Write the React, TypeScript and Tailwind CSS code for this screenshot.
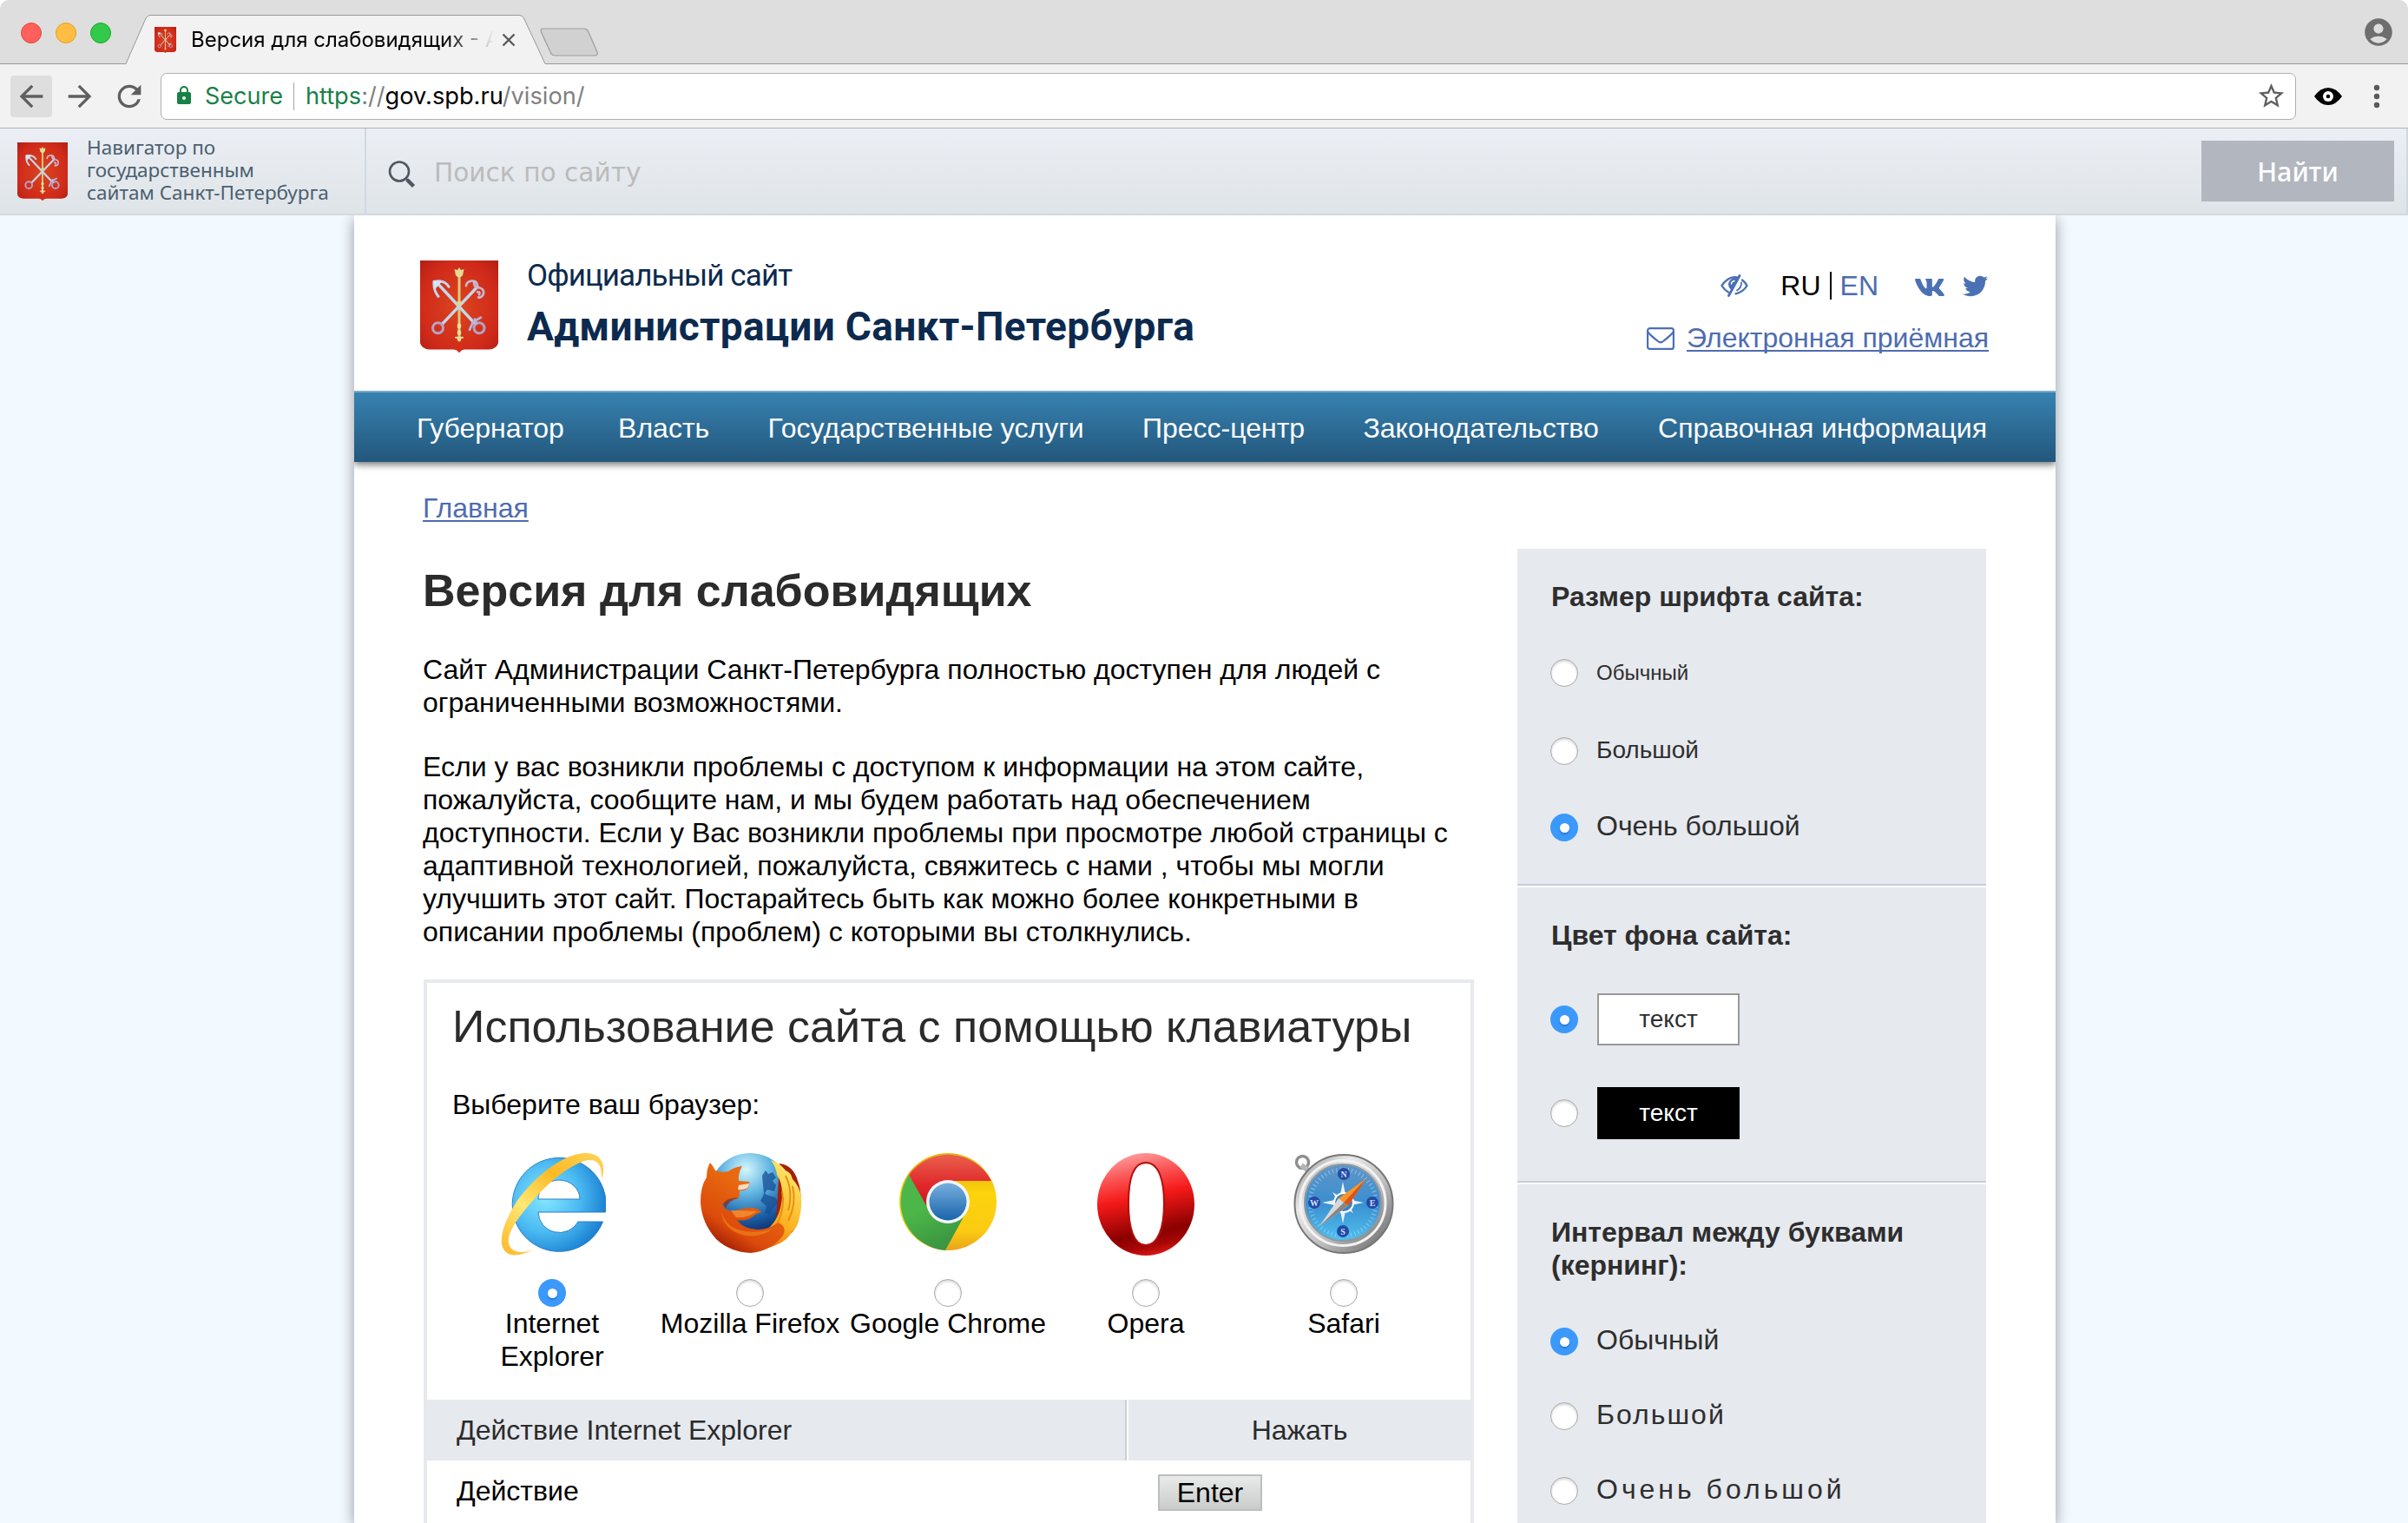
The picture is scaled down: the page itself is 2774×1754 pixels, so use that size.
import React from "react";
import { FaTwitter, FaVk } from "react-icons/fa";
import { MdAccountCircle, MdArrowBack, MdArrowForward, MdLock, MdRefresh, MdStarBorder } from "react-icons/md";

function CoatOfArms({ id, className }: { id: string; className: string }) {
  return (
    <svg viewBox="0 0 90 105" preserveAspectRatio="none" className={className} fill="none">
      <defs>
        <radialGradient id={id} cx="0.5" cy="0.5" r="0.7">
          <stop offset="0" stopColor="#da451f" />
          <stop offset="0.7" stopColor="#d02a1a" />
          <stop offset="1" stopColor="#b31f14" />
        </radialGradient>
      </defs>
      <path d="M0 0H90V94Q88 101 79 101.500H51Q47 102 45 105.500Q43 102 39 101.500H11Q2 101 0 94Z" fill={`url(#${id})`} />
      <g stroke="#eadf95" strokeLinecap="round">
        <path d="M45 16V91" stroke="#dccb7c" strokeWidth="3" />
        <path d="M45 74V90" strokeWidth="4.500" strokeDasharray="1.500 6" />
        <path d="M41 88H49" strokeWidth="2" />
      </g>
      <path d="M39.500 10L43 11L45 8L47 11L50.500 10L49 17L46.500 19H43.500L41 17Z" fill="#e6da92" />
      <g stroke="#c3d6ea" strokeLinecap="round">
        <path d="M19 25L63 72" strokeWidth="3.400" />
        <path d="M26 72L66 30" strokeWidth="3.400" />
        <path d="M16 24Q15 34 21 41M17 24Q28 22 33 30" strokeWidth="3" />
        <path d="M66 30Q66 22 58 23.500Q53 25 53 29M62 25Q62 30 66 31Q74 31 73 38Q71 43 67 42M66 36Q70 36 68 39" stroke="#c9b9cf" strokeWidth="2.600" />
        <circle cx="20.500" cy="77" r="6" stroke="#b3a3c6" strokeWidth="3" />
        <circle cx="68" cy="77" r="6" stroke="#b3a3c6" strokeWidth="3" />
        <path d="M70 65L61 70L57 79M63 67L65 72" stroke="#b9b4d0" strokeWidth="2.800" />
      </g>
      <path d="M15 23L25 24L17 33Z" fill="#d5e6f5" />
      <circle cx="45" cy="49" r="3" fill="#dfd58c" />
    </svg>
  );
}

function Radio({ checked = false }: { checked?: boolean }) {
  return checked ? (
    <span className="flex h-8 w-8 shrink-0 items-center justify-center rounded-full bg-[#3b99fc]">
      <span className="h-[11px] w-[11px] rounded-full bg-white shadow-[0_2px_2px_rgba(0,60,140,0.35)]" />
    </span>
  ) : (
    <span className="block h-8 w-8 shrink-0 rounded-full border border-[#a9a9a9] bg-white shadow-[inset_0_2px_3px_rgba(0,0,0,0.16)]" />
  );
}

function InternetExplorerLogo() {
  return (
    <svg width="121" height="118" viewBox="0 0 121 118">
      <defs>
        <radialGradient id="ie-body" cx="0.35" cy="0.42" r="0.75">
          <stop offset="0" stopColor="#86e8ff" />
          <stop offset="0.5" stopColor="#4bb9f2" />
          <stop offset="1" stopColor="#0a6fc7" />
        </radialGradient>
        <linearGradient id="ie-ring" x1="0" y1="1" x2="1" y2="0">
          <stop offset="0" stopColor="#fdb52a" />
          <stop offset="0.35" stopColor="#ffe873" />
          <stop offset="0.65" stopColor="#fdb924" />
          <stop offset="1" stopColor="#ffd45a" />
        </linearGradient>
      </defs>
      <path
        fillRule="evenodd"
        stroke="#2d7fc4"
        strokeWidth="1"
        fill="url(#ie-body)"
        d="M120.500 68A54 54 0 1 0 117.500 79H89A24.500 24 0 0 1 43 68ZM43 53A24 22 0 0 1 91 53Z"
      />
      <path
        fill="url(#ie-ring)"
        d="M116 30C122 14 116 0 98 0C72 0 38 28 18 56C4 78 -2 98 2 108C6 120 20 120 38 111C24 116 12 115 9 104C7 92 20 74 34 58C54 34 76 16 96 9C110 5 117 12 116 30Z"
      />
    </svg>
  );
}

function FirefoxLogo() {
  return (
    <svg width="118" height="116" viewBox="0 0 118 116">
      <defs>
        <radialGradient id="ff-globe" cx="0.45" cy="0.2" r="0.85">
          <stop offset="0" stopColor="#d5f6fd" />
          <stop offset="0.35" stopColor="#62b6e2" />
          <stop offset="0.7" stopColor="#1c61a8" />
          <stop offset="1" stopColor="#0a1f5c" />
        </radialGradient>
        <linearGradient id="ff-fox" x1="0.6" y1="0.3" x2="0.2" y2="1">
          <stop offset="0" stopColor="#e8690f" />
          <stop offset="0.6" stopColor="#dc4a0b" />
          <stop offset="1" stopColor="#8e1204" />
        </linearGradient>
        <linearGradient id="ff-tail" x1="0.7" y1="0" x2="0.2" y2="1">
          <stop offset="0" stopColor="#fde96b" />
          <stop offset="0.55" stopColor="#fbb321" />
          <stop offset="1" stopColor="#e8650c" />
        </linearGradient>
      </defs>
      <circle cx="58" cy="47" r="47" fill="url(#ff-globe)" />
      <path d="M72 26l4-6 3 4 5-2 4 6-4 4 4 5-2 7-8-2-3 4 2 2 10 3 4 6-6 6-4 8-6-2 2-8-7-6 4-8z" fill="#174f94" opacity="0.75" />
      <path d="M92 12Q108 14 113 32Q120 50 113 74Q112 90 100 96L88 80Z" fill="#a42008" />
      <path
        d="M82 8Q92 11 99 20Q105 22 107 30Q115 38 117 50Q118 62 115 74Q113 86 106 91Q102 100 88 106Q72 113 52 110L46 94Q68 98 82 84Q95 70 95 46Q95 34 89 25Q88 16 82 8Z"
        fill="url(#ff-tail)"
      />
      <path d="M99 26Q108 44 102 66M107 38Q112 58 102 78M95 44Q99 62 89 82" fill="none" stroke="#e98a12" strokeWidth="1.800" />
      <path
        d="M12 11Q15 14 18 20Q25 23 33 21Q40 16 49 15Q44 23 45 32L57 33Q58 38 55 41Q50 44 46 43Q46 48 45 52Q33 51 26 59Q28 66 39 67Q49 63 60 63Q69 64 71 68Q64 70 60 74Q52 79 43 77Q51 88 67 88Q80 88 90 80Q101 84 96 95Q82 113 59 115Q35 114 19 99Q2 80 1 56Q1 38 8 28Q8 18 12 11Z"
        fill="url(#ff-fox)"
      />
      <path d="M45 37Q50 36 57 35Q57 40 53 41Q48 43 44 42Z" fill="#f6dcc4" />
      <path d="M26 59Q22 72 36 84Q56 96 84 87Q66 101 43 92Q21 81 26 59Z" fill="#f28a1c" opacity="0.6" />
      <path d="M36 66Q52 66 66 67Q56 75 42 74Z" fill="#f79a3c" opacity="0.7" />
      <path d="M27 58Q34 50 45 52Q33 54 30 64Z" fill="#9c2406" opacity="0.7" />
    </svg>
  );
}

function ChromeLogo() {
  return (
    <svg width="112" height="112" viewBox="0 0 112 112">
      <defs>
        <linearGradient id="gc-red" x1="0" y1="0" x2="0" y2="1">
          <stop offset="0" stopColor="#e9604c" />
          <stop offset="0.6" stopColor="#e0262b" />
          <stop offset="1" stopColor="#c41c22" />
        </linearGradient>
        <linearGradient id="gc-green" x1="0" y1="0" x2="0.4" y2="1">
          <stop offset="0.5" stopColor="#4cb748" />
          <stop offset="1" stopColor="#3c9742" />
        </linearGradient>
        <linearGradient id="gc-yellow" x1="0" y1="0" x2="0" y2="1">
          <stop offset="0.2" stopColor="#e9b80e" />
          <stop offset="0.4" stopColor="#fcd30c" />
          <stop offset="0.8" stopColor="#fbcb13" />
          <stop offset="1" stopColor="#e9a41b" />
        </linearGradient>
        <linearGradient id="gc-blue" x1="0" y1="0" x2="0" y2="1">
          <stop offset="0" stopColor="#77aedd" />
          <stop offset="1" stopColor="#1a65ac" />
        </linearGradient>
      </defs>
      <circle cx="56" cy="56" r="56" fill="url(#gc-yellow)" />
      <path d="M11 25A56 56 0 0 0 53 112L76 70L34 62Z" fill="url(#gc-green)" />
      <path d="M11 25A56 56 0 0 1 106 32H56L32 62Z" fill="url(#gc-red)" />
      <circle cx="56" cy="56" r="25" fill="#f3f5f7" />
      <circle cx="56" cy="56" r="21.500" fill="url(#gc-blue)" />
    </svg>
  );
}

function OperaLogo() {
  return (
    <svg width="112" height="118" viewBox="0 0 112 118">
      <defs>
        <linearGradient id="op-body" x1="0.4" y1="0" x2="0.6" y2="1">
          <stop offset="0" stopColor="#ff9a9a" />
          <stop offset="0.2" stopColor="#fb5555" />
          <stop offset="0.42" stopColor="#f51919" />
          <stop offset="0.78" stopColor="#8a0000" />
          <stop offset="0.9" stopColor="#a80606" />
          <stop offset="1" stopColor="#e01818" />
        </linearGradient>
      </defs>
      <path
        fillRule="evenodd"
        fill="url(#op-body)"
        d="M56 0A56 59 0 0 1 56 118A56 59 0 0 1 56 0ZM56 12C40 12 36 34 36 58C36 86 42 106 56 106C70 106 77 86 77 58C77 34 72 12 56 12Z"
      />
      <path d="M56 11C40 11 36 34 36 58C36 86 42 106 56 106C70 106 77 86 77 58C77 34 72 11 56 11Z" fill="none" stroke="#b01010" strokeWidth="2" />
    </svg>
  );
}

function SafariLogo() {
  const points: [string, number, number][] = [
    ["N", 58, 24],
    ["W", 24, 57],
    ["E", 91, 57],
    ["S", 57, 90],
  ];
  return (
    <svg width="116" height="117" viewBox="0 0 116 117">
      <defs>
        <linearGradient id="sf-rim" x1="0" y1="0" x2="1" y2="1">
          <stop offset="0" stopColor="#8e8e8e" />
          <stop offset="0.3" stopColor="#e9e9e9" />
          <stop offset="0.6" stopColor="#bcbcbc" />
          <stop offset="1" stopColor="#5e5e5e" />
        </linearGradient>
        <linearGradient id="sf-face" x1="0" y1="0" x2="0" y2="1">
          <stop offset="0" stopColor="#5f95c6" />
          <stop offset="0.5" stopColor="#3b8fd0" />
          <stop offset="1" stopColor="#4fc0ee" />
        </linearGradient>
      </defs>
      <circle cx="10.500" cy="10.500" r="7" fill="none" stroke="#8f8f8f" strokeWidth="3.500" />
      <path d="M9 14L20 22" stroke="#b5b5b5" strokeWidth="6" />
      <circle cx="58" cy="58.500" r="56.500" fill="url(#sf-rim)" stroke="#777777" strokeWidth="2" />
      <circle cx="57" cy="57.500" r="49" fill="none" stroke="#f2f2f2" strokeWidth="3" />
      <circle cx="57" cy="57" r="44" fill="url(#sf-face)" stroke="#8b98a3" strokeWidth="2" />
      <circle cx="57" cy="57" r="38" fill="none" stroke="#a6d4f2" strokeWidth="5" strokeDasharray="1 3.500" opacity="0.7" />
      <path d="M57 33L60.500 50L69 45L64 53.500L81 57L64 60.500L69 69L60.500 64L57 81L53.500 64L45 69L50 60.500L33 57L50 53.500L45 45L53.500 50Z" fill="#e6f3fb" />
      <circle cx="58" cy="57" r="11" fill="#3a7fbe" stroke="#ffffff" strokeWidth="2" />
      {points.map(([letter, x, y]) => (
        <g key={letter}>
          <circle cx={x} cy={y} r="7" fill="#2449a6" />
          <text x={x} y={y + 3.5} textAnchor="middle" fontSize="10" fontFamily="Liberation Serif, serif" fontWeight="700" fill="#cfe0f5">
            {letter}
          </text>
        </g>
      ))}
      <path d="M84 29L63 61L52 52Z" fill="#f6952c" />
      <path d="M84 29L63 61L58 57Z" fill="#d9531b" />
      <path d="M30 84L52 52L63 61Z" fill="#d8d8d8" />
      <path d="M30 84L58 57L63 61Z" fill="#868686" />
    </svg>
  );
}

function BrowserChrome() {
  return (
    <div>
      <div className="flex h-[74px] items-end rounded-t-[10px] border-b border-[#989898] bg-[#dedede]">
        <div className="flex w-[145px] shrink-0 gap-4 self-start pl-6 pt-[26px]">
          <span className="h-6 w-6 rounded-full border border-[#e2463f] bg-[#ff605c]" />
          <span className="h-6 w-6 rounded-full border border-[#e1a116] bg-[#ffbd44]" />
          <span className="h-6 w-6 rounded-full border border-[#12ac28] bg-[#33c94b]" />
        </div>
        <div className="relative -mb-px flex h-[57px] w-[483px] shrink-0 items-center pl-[33px] text-black">
          <svg className="absolute inset-0" width="483" height="57" viewBox="0 0 483 57">
            <path d="M0 56.500L23 4Q25 0.500 28 0.500H453Q457 0.500 458.500 4L483 56.500V57H0Z" fill="#f2f2f2" />
            <path d="M0 56.500L23 4Q25 0.500 28 0.500H453Q457 0.500 458.500 4L483 56.500" fill="none" stroke="#989898" />
          </svg>
          <CoatOfArms id="coat-tab" className="relative h-[30px] w-[25px]" />
          <span className="relative ml-[17px] w-[349px] overflow-hidden whitespace-nowrap font-['Inter',sans-serif] text-[24px] leading-[34px] [mask-image:linear-gradient(to_right,black_84%,transparent)]">
            Версия для слабовидящих - А
          </span>
          <svg className="relative ml-[9px]" width="16" height="16" viewBox="0 0 16 16" stroke="#5a5a5a" strokeWidth="2.400">
            <path d="M1.500 1.500L14.500 14.500M14.500 1.500L1.500 14.500" />
          </svg>
        </div>
        <svg className="mb-[7px] -ml-[6px]" width="68" height="34" viewBox="0 0 68 34">
          <path d="M3 1H51Q54 1 55.500 4L66 28Q67 32 63 32H17Q14 32 12.500 29L1.500 5Q0.500 1 3 1Z" fill="#d1d1d1" stroke="#9d9d9d" strokeWidth="1.200" />
        </svg>
        <MdAccountCircle className="mb-[17px] ml-auto mr-[15px] h-[38px] w-[38px] text-[#6e6e6e]" />
      </div>
      <div className="flex h-[74px] items-center border-b border-[#b2b2b2] bg-[#f2f2f2] pl-3 font-['Inter',sans-serif] text-[27px] text-[#5f5f5f]">
        <span className="flex h-12 w-12 items-center justify-center rounded bg-[#dedede]">
          <MdArrowBack className="h-10 w-10" />
        </span>
        <MdArrowForward className="ml-3 h-10 w-10" />
        <MdRefresh className="ml-[17px] h-10 w-10" />
        <div className="ml-[16px] flex h-[54px] w-[2460px] items-center rounded-[7px] border border-[#b0b0b0] bg-white pl-[14px]">
          <MdLock className="-mt-[1px] h-6 w-6 text-[#188146]" />
          <span className="ml-3 text-[#188146]">Secure</span>
          <span className="ml-[12px] h-8 w-px bg-[#a5a5a5]" />
          <span className="ml-[13px] whitespace-nowrap text-[27.200px]">
            <span className="text-[#188146]">https</span>
            <span className="text-[#808080]">://</span>
            <span className="text-black">gov.spb.ru</span>
            <span className="text-[#808080]">/vision/</span>
          </span>
          <MdStarBorder className="ml-auto mr-[10px] h-[35px] w-[35px]" />
        </div>
        <svg className="ml-[21px]" width="32" height="20" viewBox="0 0 32 20">
          <path d="M0 10Q7 0 16 0T32 10Q25 20 16 20T0 10Z" fill="#000000" />
          <circle cx="16" cy="10" r="6" fill="#ffffff" />
          <circle cx="16" cy="10" r="2.300" fill="#000000" />
        </svg>
        <svg className="ml-[36px]" width="8" height="28" viewBox="0 0 8 28" fill="#5a5a5a">
          <circle cx="4" cy="4" r="3.200" />
          <circle cx="4" cy="14" r="3.200" />
          <circle cx="4" cy="24" r="3.200" />
        </svg>
      </div>
    </div>
  );
}

function SearchBar() {
  return (
    <div className="flex h-[100px] shrink-0 border-b-2 border-r-2 border-[#d0d9e0] bg-gradient-to-b from-[#ebeff5] to-[#dfe4e8]">
      <div className="flex w-[422px] border-r-2 border-[#d0d9e0] pl-5 pt-4">
        <CoatOfArms id="coat-nav" className="h-[67px] w-[58px]" />
        <div className="-mt-[7px] ml-[22px] whitespace-nowrap font-['Noto_Sans',sans-serif] text-[22.500px] leading-[26px] text-[#4b5f6f]">
          Навигатор по
          <br />
          государственным
          <br />
          сайтам Санкт-Петербурга
        </div>
      </div>
      <svg className="ml-[25px] mt-[37px]" width="32" height="32" viewBox="0 0 32 32" fill="none" stroke="#50575f">
        <circle cx="13" cy="12.500" r="11" strokeWidth="2.600" />
        <path d="M22 22L29.500 29.500" strokeWidth="4.500" />
        <path d="M20 20L23 23" strokeWidth="2.400" />
      </svg>
      <span className="ml-[21px] mt-[31px] font-['DejaVu_Sans',sans-serif] text-[29.600px] leading-[40px] text-[#bbbbbb]">Поиск по сайту</span>
      <button className="ml-auto mr-[14px] mt-[14px] h-[70px] w-[222px] bg-[#b2b6be] font-['Noto_Sans',sans-serif] text-[30.500px] font-medium leading-[70px] text-white">
        Найти
      </button>
    </div>
  );
}

function PageHeader() {
  return (
    <header className="flex h-[202px] shrink-0 pl-[76px] pr-[77px]">
      <CoatOfArms id="coat-main" className="mt-[52px] h-[106px] w-[90px]" />
      <div className="ml-[33px] mt-[49px] whitespace-nowrap font-['Roboto',sans-serif] text-[#0c2a4e]">
        <div className="text-[35px] leading-[42px] tracking-[-0.900px]">Официальный сайт</div>
        <div className="mt-[9px] text-[46px] font-bold leading-[56px] tracking-[0.330px]">Администрации Санкт-Петербурга</div>
      </div>
      <div className="ml-auto mt-[62px] flex flex-col items-end gap-[22px] text-[#4e6cb0]">
        <div className="flex h-[38px] items-center">
          <svg width="32" height="26" viewBox="0 0 32 26" fill="none" stroke="#4b70b4" strokeWidth="2.400" strokeLinecap="round">
            <path d="M19 3.500Q16 3 13 3.700Q6 6 1.500 13Q4.500 18 9 20.500" />
            <path d="M25 6.500Q28.500 9 30.500 13Q26 20.500 17.500 22.300" />
            <path d="M22 1.500L9.500 24.500" strokeWidth="2.800" />
            <path d="M20 3.500Q10 4.500 9.500 11Q9.500 15.500 12.500 17.500Z" fill="#4b70b4" strokeWidth="1" />
            <path d="M12.500 11Q12.800 7.800 16 7.500" stroke="#ffffff" strokeWidth="1.500" />
            <path d="M24 9.500Q24.500 15 19 18.500" strokeWidth="1.800" />
          </svg>
          <span className="ml-[37px] text-black">RU</span>
          <span className="ml-[10px] h-8 w-[2px] bg-black" />
          <span className="ml-[10px]">EN</span>
          <FaVk className="ml-[41px] mt-[3px] h-9 w-9 text-[#4b70b4]" />
          <FaTwitter className="ml-[20px] mr-px h-[29px] w-[29px] text-[#4b70b4]" />
        </div>
        <div className="flex h-[38px] items-center">
          <svg className="mt-[1px]" width="32" height="26" viewBox="0 0 32 26" fill="none" stroke="#4b70b4" strokeWidth="2.200">
            <rect x="1.100" y="1.100" width="29.800" height="23.800" rx="2.500" />
            <path d="M1.500 5.500Q4 9 13 16Q16 18.500 19 16Q28 9 30.500 5.500" />
          </svg>
          <span className="ml-[14px] underline decoration-2 underline-offset-[3px] [text-decoration-skip-ink:none]">Электронная приёмная</span>
        </div>
      </div>
    </header>
  );
}

const MENU = ["Губернатор", "Власть", "Государственные услуги", "Пресс-центр", "Законодательство", "Справочная информация"];

const BROWSERS = [
  { name: "Internet Explorer", Logo: InternetExplorerLogo },
  { name: "Mozilla Firefox", Logo: FirefoxLogo },
  { name: "Google Chrome", Logo: ChromeLogo },
  { name: "Opera", Logo: OperaLogo },
  { name: "Safari", Logo: SafariLogo },
];

function Article() {
  return (
    <main className="w-[1211px] shrink-0 pt-[18px] text-black">
      <h1 className="text-[52px] font-bold leading-[60px] text-[#2b2b2b]">Версия для слабовидящих</h1>
      <p className="mt-[42px] w-[1200px]">Сайт Администрации Санкт-Петербурга полностью доступен для людей с ограниченными возможностями.</p>
      <p className="mt-9 w-[1200px]">
        Если у вас возникли проблемы с доступом к информации на этом сайте, пожалуйста, сообщите нам, и мы будем работать над обеспечением доступности.
        Если у Вас возникли проблемы при просмотре любой страницы с адаптивной технологией, пожалуйста, свяжитесь с нами , чтобы мы могли улучшить этот
        сайт. Постарайтесь быть как можно более конкретными в описании проблемы (проблем) с которыми вы столкнулись.
      </p>
      <section className="ml-px mt-9 h-[700px] w-[1210px] border-4 border-[#e6e9ee]">
        <h2 className="pl-[29px] pt-5 text-[52px] leading-[60px] text-[#2b2b2b]">Использование сайта с помощью клавиатуры</h2>
        <div className="mt-[41px] pl-[29px]">Выберите ваш браузер:</div>
        <div className="ml-[30px] mt-[37px] flex h-[284px]">
          {BROWSERS.map(({ name, Logo }, i) => (
            <div key={name} className="flex w-[228px] flex-col items-center">
              <div className={i < 2 ? "h-[118px] pl-[2px]" : "h-[118px]"}>
                <Logo />
              </div>
              <div className="mt-[27px] h-8">
                <Radio checked={i === 0} />
              </div>
              <span className={i === 0 ? "w-[180px] text-center" : "whitespace-nowrap"}>{name}</span>
            </div>
          ))}
        </div>
        <div className="flex h-[70px] items-center bg-[#e6e9ee] text-[#2b2b2b]">
          <div className="flex h-full w-[806px] items-center border-r-2 border-[#cccfd4] pl-[34px]">Действие Internet Explorer</div>
          <div className="h-full w-[2px] bg-white" />
          <div className="flex-1 text-center">Нажать</div>
        </div>
        <div className="flex pt-4">
          <div className="w-[842px] pl-[34px]">Действие</div>
          <kbd className="flex h-[42px] w-[120px] justify-center border-2 border-[#bcbebe] bg-gradient-to-b from-[#e9ebea] to-[#c9cccb] font-['Liberation_Sans',Arial,sans-serif]">
            Enter
          </kbd>
        </div>
      </section>
    </main>
  );
}

function Sidebar() {
  return (
    <aside className="ml-[50px] w-[540px] shrink-0 text-[#2e2e2e]">
      <section className="h-[388px] border-b-2 border-[#c8cedb] bg-[#e6e9ee] pl-[38px] pt-9">
        <h3 className="pl-px font-bold">Размер шрифта сайта:</h3>
        <div className="mt-[50px] flex h-[38px] items-center gap-[21px]">
          <Radio />
          <span className="text-[24px]">Обычный</span>
        </div>
        <div className="mt-[52px] flex h-[38px] items-center gap-[21px]">
          <Radio />
          <span className="pb-[2px] text-[28px]">Большой</span>
        </div>
        <div className="mt-[50px] flex h-[38px] items-center gap-[21px]">
          <Radio checked />
          <span className="pb-1">Очень большой</span>
        </div>
      </section>
      <section className="mt-[2px] h-[340px] border-b-2 border-[#c8cedb] bg-[#e6e9ee] pl-[38px] pt-9">
        <h3 className="pl-px font-bold">Цвет фона сайта:</h3>
        <div className="mt-12 flex h-[60px] items-center gap-[22px]">
          <Radio checked />
          <span className="flex h-[60px] w-[164px] items-center justify-center border-2 border-[#999999] bg-white text-[28px]">текст</span>
        </div>
        <div className="mt-12 flex h-[60px] items-center gap-[22px]">
          <Radio />
          <span className="flex h-[60px] w-[164px] items-center justify-center bg-black text-[28px] text-white">текст</span>
        </div>
      </section>
      <section className="mt-[2px] h-[420px] bg-[#e6e9ee] pl-[38px] pt-9">
        <h3 className="pl-px font-bold">
          Интервал между буквами
          <br />
          (кернинг):
        </h3>
        <div className="mt-[50px] flex h-[38px] items-center gap-[21px]">
          <Radio checked />
          <span className="pb-1">Обычный</span>
        </div>
        <div className="mt-12 flex h-[38px] items-center gap-[21px]">
          <Radio />
          <span className="pb-1 tracking-[2px]">Большой</span>
        </div>
        <div className="mt-12 flex h-[38px] items-center gap-[21px]">
          <Radio />
          <span className="pb-1 tracking-[4px]">Очень большой</span>
        </div>
      </section>
    </aside>
  );
}

export default function App() {
  return (
    <div className="flex h-[1754px] w-[2774px] flex-col overflow-hidden bg-white font-['Liberation_Sans',Arial,sans-serif] text-[32px] leading-[38px]">
      <BrowserChrome />
      <SearchBar />
      <div className="flex-1 overflow-hidden bg-[#f3faff]">
        <div className="ml-[408px] flex h-full w-[1960px] flex-col bg-white shadow-[0_4px_16px_rgba(0,0,0,0.4)]">
          <PageHeader />
          <nav className="flex h-[82px] shrink-0 justify-between border-t-2 border-[#79abc9] bg-gradient-to-b from-[#3782b1] to-[#23577c] pl-[72px] pr-[79px] pt-[22px] text-white shadow-[0_3px_8px_rgba(0,0,0,0.55)] [clip-path:inset(0_0_-16px_0)]">
            {MENU.map((item) => (
              <a key={item} className="first:-mr-[5px] last:ml-px">
                {item}
              </a>
            ))}
          </nav>
          <div className="pl-[79px] pt-[34px]">
            <a className="text-[#4e6cb0] underline decoration-2 underline-offset-[3px]">Главная</a>
          </div>
          <div className="mt-7 flex pl-[79px]">
            <Article />
            <Sidebar />
          </div>
        </div>
      </div>
    </div>
  );
}
